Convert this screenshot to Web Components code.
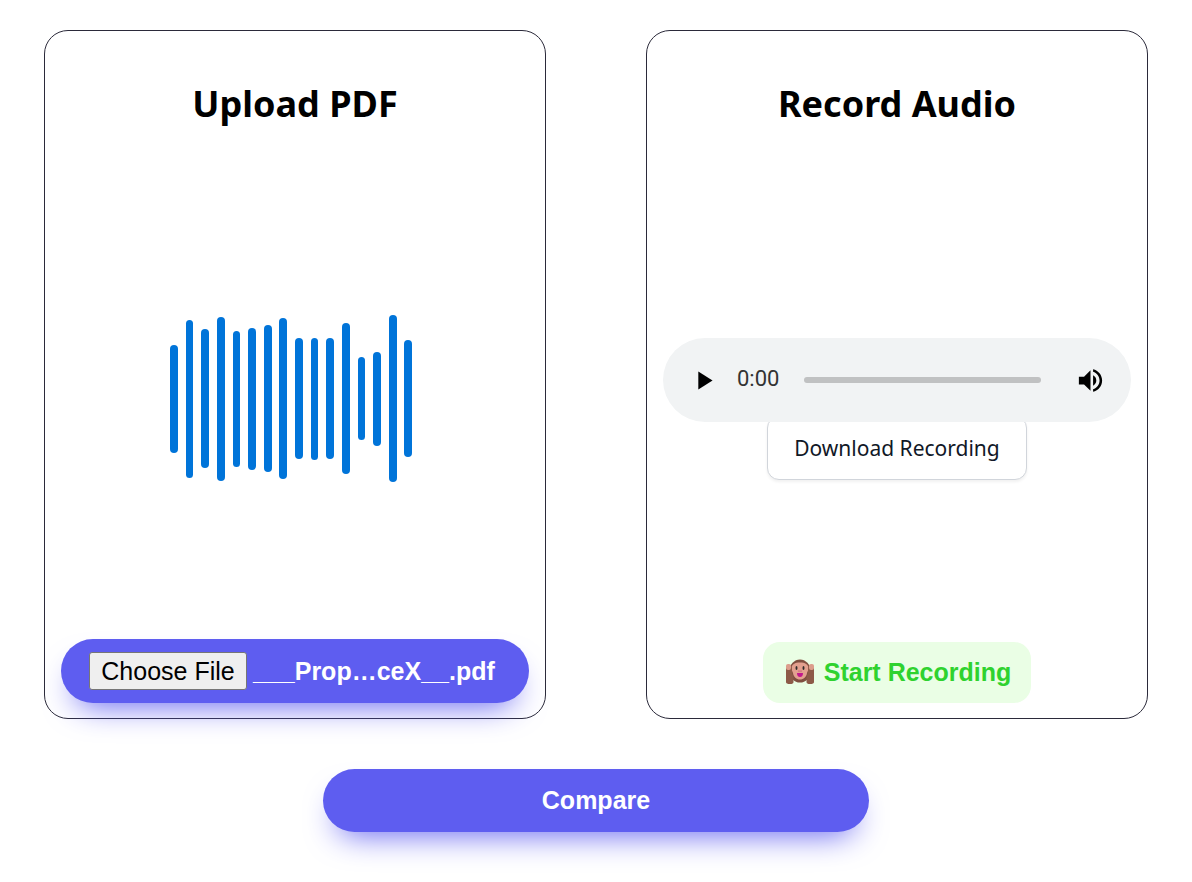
<!DOCTYPE html>
<html lang="en">
<head>
<meta charset="utf-8">
<meta name="viewport" content="width=device-width, initial-scale=1">
<title>Compare PDF and audio</title>
<style>
  html, body { margin: 0; background: #fff; }
  body { font-family: "Noto Sans", "Open Sans", sans-serif; color: #000; }
</style>
</head>
<body>
<compare-page></compare-page>
<script>
const define = (name, html, setup) => {
  const template = document.createElement('template');
  template.innerHTML = html;
  customElements.define(name, class extends HTMLElement {
    constructor() {
      super();
      this.attachShadow({ mode: 'open' }).append(template.content.cloneNode(true));
      if (setup) setup(this.shadowRoot, this);
    }
  });
};

define('panel-card', `
  <style>
    :host { display: flex; flex-direction: column; box-sizing: border-box; min-width: 0;
      min-height: 689px; padding: 15px 16px; border: 1px solid #2b2a3a; border-radius: 24px; }
    h2 { margin: 32px 0 28px; font-size: 36px; line-height: 52px; font-weight: 700; text-align: center; }
    .stage { flex: 1; display: flex; flex-direction: column; align-items: center; justify-content: center; }
    .action { display: flex; justify-content: center; }
  </style>
  <h2><slot name="title"></slot></h2>
  <div class="stage"><slot></slot></div>
  <div class="action"><slot name="action"></slot></div>
`);

/* Each bar: left, top, width, height */
const bars = [[0,30,8,108],[16,5,7,158],[31,14,8,139],[47,2,8,164],[63,16,7,136],[78,13,8,142],
  [94,10,8,147],[109,3,8,161],[125,23,8,121],[141,23,7,122],[156,23,8,121],[172,8,8,151],
  [188,42,7,83],[203,37,8,94],[219,0,8,167],[234,25,8,117]];
define('wave-form', `
  <style>
    :host { display: block; }
    svg { display: block; width: 250px; height: 167px; fill: #0074d9; }
  </style>
  <svg viewBox="0 0 250 167" role="img" aria-label="Waveform">
    ${bars.map(([x, y, w, h]) => `<rect x="${x}" y="${y}" width="${w}" height="${h}" rx="${w / 2}"/>`).join('')}
  </svg>
`);

define('file-picker', `
  <style>
    :host { display: block; flex: 1; min-width: 0; }
    .pill { display: flex; align-items: center; gap: 6px; box-sizing: border-box; height: 64px; padding: 0 28px;
      border-radius: 32px; background: #5e5df0; box-shadow: #5e5df0 0 16px 32px -14px;
      font: 700 25px/38px "Liberation Sans", Arial, sans-serif; color: #fff; white-space: nowrap; position: relative; }
    button { box-sizing: border-box; width: 158px; height: 38px; padding: 0; border: 1px solid #767676;
      border-radius: 3px; background: #efefef; color: #000; font: 400 25px/34px "Liberation Sans", Arial, sans-serif; }
    input { position: absolute; width: 1px; height: 1px; opacity: 0; pointer-events: none; }
  </style>
  <div class="pill">
    <input type="file" id="pdf" accept="application/pdf" aria-label="PDF file" tabindex="-1">
    <button type="button">Choose File</button>
    <label for="pdf">___Prop…ceX__.pdf</label>
  </div>
`, root => {
  const input = root.querySelector('input');
  root.querySelector('button').addEventListener('click', () => input.click());
  input.addEventListener('change', () => {
    if (input.files[0]) root.querySelector('label').textContent = input.files[0].name;
  });
});

define('audio-player', `
  <style>
    :host { display: flex; align-items: center; align-self: stretch; box-sizing: border-box; height: 84px;
      padding: 0 25px; border-radius: 42px; background: #f1f3f4; position: relative; z-index: 1; }
    button { flex: none; display: block; width: 31px; height: 31px; padding: 0; border: 0; background: none; color: #000; }
    svg { display: block; width: 31px; height: 31px; fill: currentColor; }
    time { width: 42px; margin: 0 25px 0 18px; padding-bottom: 2px; font-size: 22px; line-height: 30px; color: #333; white-space: nowrap;
      font-family: Roboto, "Noto Sans", sans-serif; }
    input { flex: 1; min-width: 0; height: 6px; margin: 0 34px 0 0; appearance: none; border-radius: 3px; background: #c0c1c2; }
    input::-webkit-slider-thumb { appearance: none; width: 6px; height: 6px; background: transparent; }
  </style>
  <button type="button" aria-label="Play"><svg viewBox="0 0 24 24"><path d="M8 5v14l11-7z"/></svg></button>
  <time>0:00</time>
  <input type="range" min="0" max="100" value="0" aria-label="Position">
  <button type="button" aria-label="Mute"><svg viewBox="0 0 24 24"><path d="M3 9v6h4l5 5V4L7 9H3zm13.500 3c0-1.770-1.020-3.290-2.500-4.030v8.050c1.480-.730 2.500-2.250 2.500-4.020zM14 3.230v2.060c2.890.860 5 3.540 5 6.710s-2.110 5.850-5 6.710v2.060c4.010-.910 7-4.490 7-8.770s-2.990-7.860-7-8.770z"/></svg></button>
`);

define('download-button', `
  <style>
    :host { display: block; margin-top: -6px; }
    button { box-sizing: border-box; display: block; min-width: 260px; height: 64px; padding: 0 24px; border: 1px solid #d1d5db;
      border-radius: 12px; background: #fff; color: #111827; box-shadow: 0 2px 3px rgba(0,0,0,.06);
      font: 400 21px/30px "Noto Sans", "Open Sans", sans-serif; white-space: nowrap; }
  </style>
  <button type="button"><slot></slot></button>
`);

define('record-button', `
  <style>
    :host { display: block; }
    button { display: flex; align-items: center; justify-content: center; gap: 10px; box-sizing: border-box;
      min-width: 268px; height: 61px; padding: 0 20px 2px 23px; border: 0; border-radius: 17px; background: #eafee5; color: #2fd22f;
      font: 700 25px/30px "Liberation Sans", Arial, sans-serif; white-space: nowrap; }
    svg { flex: none; display: block; width: 28px; height: 26px; }
  </style>
  <button type="button">
    <svg viewBox="0 0 28 26" aria-hidden="true">
      <ellipse cx="14" cy="12" rx="10.500" ry="11.500" fill="#804f40"/>
      <path fill="#e3a08f" d="M14 3.500c-5 0-8.500 2-8.500 5.500 0 2.500 1 3.500 1.500 5 .5 4 3.500 6.500 7 6.500s6.500-2.500 7-6.500c.5-1.500 1.500-2.500 1.500-5 0-3.500-3.500-5.500-8.500-5.500z"/>
      <path fill="#8d5a48" d="M0 9q0-3 3-3 3 0 3 5 0 4 1.500 7v5q0 2-3.500 2-4 0-4-2zM28 9q0-3-3-3-3 0-3 5 0 4-1.500 7v5q0 2 3.500 2 4 0 4-2z"/>
      <rect x="0" y="5" width="5" height="6" rx="2" fill="#dc9d8c"/>
      <rect x="23" y="5" width="5" height="6" rx="2" fill="#dc9d8c"/>
      <ellipse cx="10.500" cy="9" rx="1" ry="2" fill="#302b2b"/>
      <ellipse cx="17.500" cy="9" rx="1" ry="2" fill="#302b2b"/>
      <circle cx="13" cy="12" r=".6" fill="#b02f62"/><circle cx="15" cy="12" r=".6" fill="#b02f62"/>
      <path fill="#c2188c" d="M11 14h6q0 4-3 4t-3-4z"/>
    </svg>
    <span><slot></slot></span>
  </button>
`);

define('compare-button', `
  <style>
    :host { display: block; width: calc(50% - 6px); margin: 0 auto; }
    button { display: block; box-sizing: border-box; width: 100%; height: 63px; padding: 0 0 2px; border: 0; border-radius: 32px;
      background: #5e5df0; color: #fff; box-shadow: #5e5df0 0 16px 32px -14px;
      font: 700 25px/38px "Liberation Sans", Arial, sans-serif; }
  </style>
  <button type="button"><slot></slot></button>
`);

define('compare-page', `
  <style>
    :host { display: block; padding: 30px 44px 50px; }
    main { display: grid; gap: 50px; }
    .panels { display: grid; grid-template-columns: repeat(2, minmax(0, 1fr)); gap: 100px; }
    .recording { align-self: stretch; display: flex; flex-direction: column; align-items: center; padding-top: 18px; }
  </style>
  <main>
    <div class="panels">
      <panel-card>
        <span slot="title">Upload PDF</span>
        <wave-form></wave-form>
        <file-picker slot="action"></file-picker>
      </panel-card>
      <panel-card>
        <span slot="title">Record Audio</span>
        <div class="recording">
          <audio-player></audio-player>
          <download-button>Download Recording</download-button>
        </div>
        <record-button slot="action">Start Recording</record-button>
      </panel-card>
    </div>
    <compare-button>Compare</compare-button>
  </main>
`);
</script>
</body>
</html>
